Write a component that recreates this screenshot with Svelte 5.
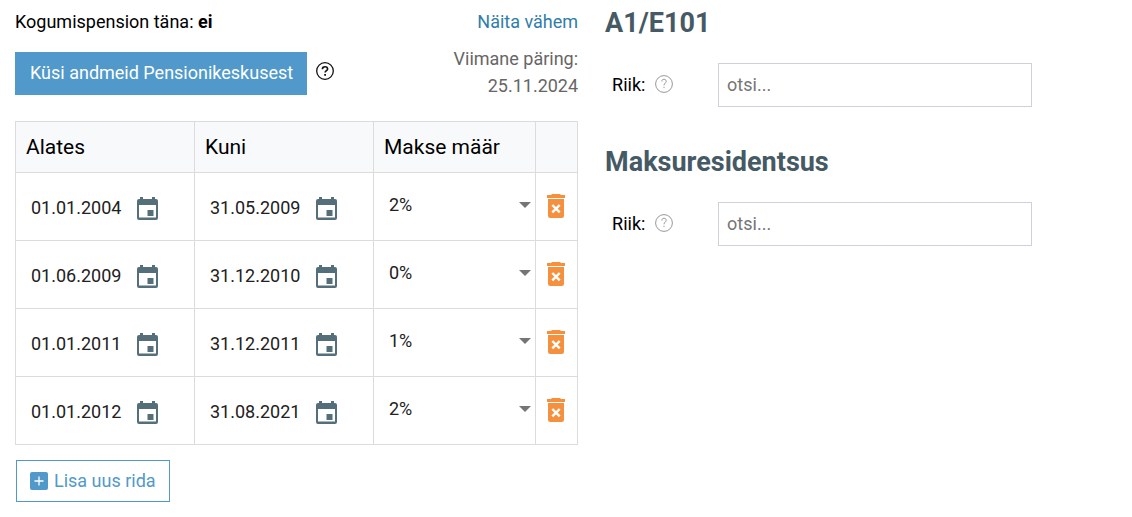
<script lang="ts">
	type Row = { from: string; to: string; rate: string };

	const rates = ["0%", "1%", "2%"];

	let rows = $state<Row[]>([
		{ from: "01.01.2004", to: "31.05.2009", rate: "2%" },
		{ from: "01.06.2009", to: "31.12.2010", rate: "0%" },
		{ from: "01.01.2011", to: "31.12.2011", rate: "1%" },
		{ from: "01.01.2012", to: "31.08.2021", rate: "2%" },
	]);

	const sections = [
		{ id: "a1", title: "A1/E101" },
		{ id: "tax", title: "Maksuresidentsus" },
	];

	function addRow() {
		rows.push({ from: "", to: "", rate: "2%" });
	}

	function removeRow(index: number) {
		rows.splice(index, 1);
	}
</script>

{#snippet dateField(row: Row, key: "from" | "to", label: string)}
	<div class="date">
		<input type="text" aria-label={label} bind:value={row[key]} />
		<button class="icon-btn" type="button" aria-label="Vali kuupäev">
			<svg width="21" height="24" viewBox="0 0 21 24">
				<path
					fill="#546e7a"
					fill-rule="evenodd"
					d="M3 1h3v2h9V1h3v2h1a2 2 0 0 1 2 2v17a2 2 0 0 1-2 2H2a2 2 0 0 1-2-2V5a2 2 0 0 1 2-2h1zM2 9v12.5h17V9z"
				/>
				<path fill="#546e7a" d="M10.5 14h6v6h-6z" />
			</svg>
		</button>
	</div>
{/snippet}

<main>
	<section>
		<div class="line">
			<span>Kogumispension täna: <strong>ei</strong></span>
			<a href="#less">Näita vähem</a>
		</div>

		<div class="query">
			<button class="primary" type="button">Küsi andmeid Pensionikeskusest</button>
			<button class="icon-btn help" type="button" aria-label="Abi">
				<svg width="18" height="18" viewBox="0 0 18 18" fill="none" stroke="#111">
					<circle cx="9" cy="9" r="8.3" stroke-width="1.3" />
					<path d="M6.4 7.2C6.4 5.5 7.5 4.7 9 4.7s2.6.8 2.6 2.2c0 1.6-2.5 1.7-2.5 3.6" stroke-width="1.6" />
					<path d="M8.2 12.8h1.8" stroke-width="1.8" />
				</svg>
			</button>
			<p class="last">Viimane päring: <br />25.11.2024</p>
		</div>

		<table>
			<colgroup>
				<col class="col-date" />
				<col class="col-date" />
				<col />
				<col class="col-action" />
			</colgroup>
			<thead>
				<tr>
					<th>Alates</th>
					<th>Kuni</th>
					<th>Makse määr</th>
					<th></th>
				</tr>
			</thead>
			<tbody>
				{#each rows as row, i}
					<tr>
						<td>{@render dateField(row, "from", "Alates")}</td>
						<td>{@render dateField(row, "to", "Kuni")}</td>
						<td>
							<div class="rate">
								<select aria-label="Makse määr" bind:value={row.rate}>
									{#each rates as rate}
										<option>{rate}</option>
									{/each}
								</select>
								<svg width="12" height="6" viewBox="0 0 12 6">
									<path fill="#757575" d="M0 0h12L6 6z" />
								</svg>
							</div>
						</td>
						<td class="action">
							<button class="icon-btn" type="button" aria-label="Kustuta" onclick={() => removeRow(i)}>
								<svg width="18" height="24" viewBox="0 0 18 24">
									<path fill="#f5913e" d="M5 0h8l1 1h4v3H0V1h4zM1 5h16v16.5a2.5 2.5 0 0 1-2.5 2.5h-11A2.5 2.5 0 0 1 1 21.5z" />
									<path stroke="#fff" stroke-width="2.4" d="M5.3 11l7.4 7.4M12.7 11l-7.4 7.4" />
								</svg>
							</button>
						</td>
					</tr>
				{/each}
			</tbody>
		</table>

		<button class="add" type="button" onclick={addRow}>
			<svg width="18" height="18" viewBox="0 0 18 18">
				<rect width="18" height="18" rx="2" fill="#5199ca" />
				<path stroke="#fff" stroke-width="1.3" d="M9 4.5v9M4.5 9h9" />
			</svg>
			<span>Lisa uus rida</span>
		</button>
	</section>

	<div class="side">
		{#each sections as s}
			<section>
				<h2>{s.title}</h2>
				<div class="field">
					<label for={s.id}>Riik:</label>
					<button class="icon-btn" type="button" aria-label="Abi">
						<svg width="18" height="18" viewBox="0 0 18 18" fill="none" stroke="#999">
							<circle cx="9" cy="9" r="8.4" />
							<path d="M6.8 6.5C6.8 5 7.6 4.3 9 4.3s2.2.8 2.2 2c0 1.7-2.2 1.9-2.2 4M9 11.8v1.3" />
						</svg>
					</button>
					<input id={s.id} type="text" placeholder="otsi..." />
				</div>
			</section>
		{/each}
	</div>
</main>

<style>
	:global(body) {
		margin: 0;
		background: #fff;
	}

	main {
		display: grid;
		grid-template-columns: 11fr 10fr;
		column-gap: 27px;
		align-items: start;
		padding: 8px 15px 15px;
		font-family: Roboto, sans-serif;
		font-size: 18px;
		line-height: 27px;
		color: #000;
	}

	button,
	input,
	select {
		font: inherit;
		color: inherit;
	}

	.icon-btn {
		display: flex;
		padding: 0;
		border: 0;
		background: none;
		cursor: pointer;
	}

	.line {
		display: flex;
		justify-content: space-between;
	}

	a {
		color: #2f7ea8;
		text-decoration: none;
	}

	.query {
		display: flex;
		align-items: flex-start;
		padding: 10px 0 22px;
	}

	.primary {
		height: 43px;
		margin-top: 7px;
		padding: 0 14px 2px 15px;
		border: 0;
		background: #5199ca;
		color: #fff;
		white-space: nowrap;
		cursor: pointer;
	}

	.help {
		margin: 17px 0 0 9px;
	}

	.last {
		margin: 0 0 0 auto;
		color: #666;
		text-align: right;
	}

	table {
		width: 100%;
		border-collapse: collapse;
		table-layout: fixed;
	}

	.col-date {
		width: 179px;
	}

	.col-action {
		width: 42px;
	}

	th,
	td {
		height: 67px;
		padding: 0;
		border: 1px solid #dcdcdc;
	}

	th {
		height: 50px;
		padding: 0 10px;
		background: #f8f9fb;
		font-size: 21px;
		font-weight: 400;
		text-align: left;
	}

	.date {
		display: flex;
		align-items: center;
		padding: 2px 0 0 15px;
		color: #212121;
	}

	.date input {
		width: 106px;
		padding: 0;
		border: 0;
		background: none;
	}

	.rate {
		display: flex;
		align-items: center;
		padding: 0 4px 4px 15px;
		color: #212121;
	}

	select {
		flex: 1;
		padding: 0;
		border: 0;
		background: none;
		appearance: none;
	}

	.action .icon-btn {
		margin: 0 auto;
		padding: 0 2px 2px 0;
	}

	.add {
		display: flex;
		align-items: center;
		gap: 6px;
		height: 42px;
		margin: 15px 0 0 1px;
		padding: 0 13px;
		border: 1px solid #5199ca;
		background: #fff;
		color: #5199ca;
		cursor: pointer;
	}

	.add span {
		padding-bottom: 2px;
	}

	.side {
		display: grid;
		gap: 40px;
	}

	h2 {
		margin: 0;
		color: #455a64;
		font-size: 27px;
		font-weight: 700;
		line-height: 31px;
	}

	.field {
		display: flex;
		align-items: center;
		max-width: 427px;
		margin-top: 24px;
	}

	.field label {
		margin: 0 10px 0 7px;
		padding-bottom: 2px;
	}

	.field .icon-btn {
		padding-bottom: 2px;
	}

	.field input {
		box-sizing: border-box;
		width: 314px;
		height: 44px;
		margin-left: auto;
		padding: 0 8px 2px;
		border: 1px solid #ced0da;
	}

	.field input::placeholder {
		color: #757575;
	}
</style>
